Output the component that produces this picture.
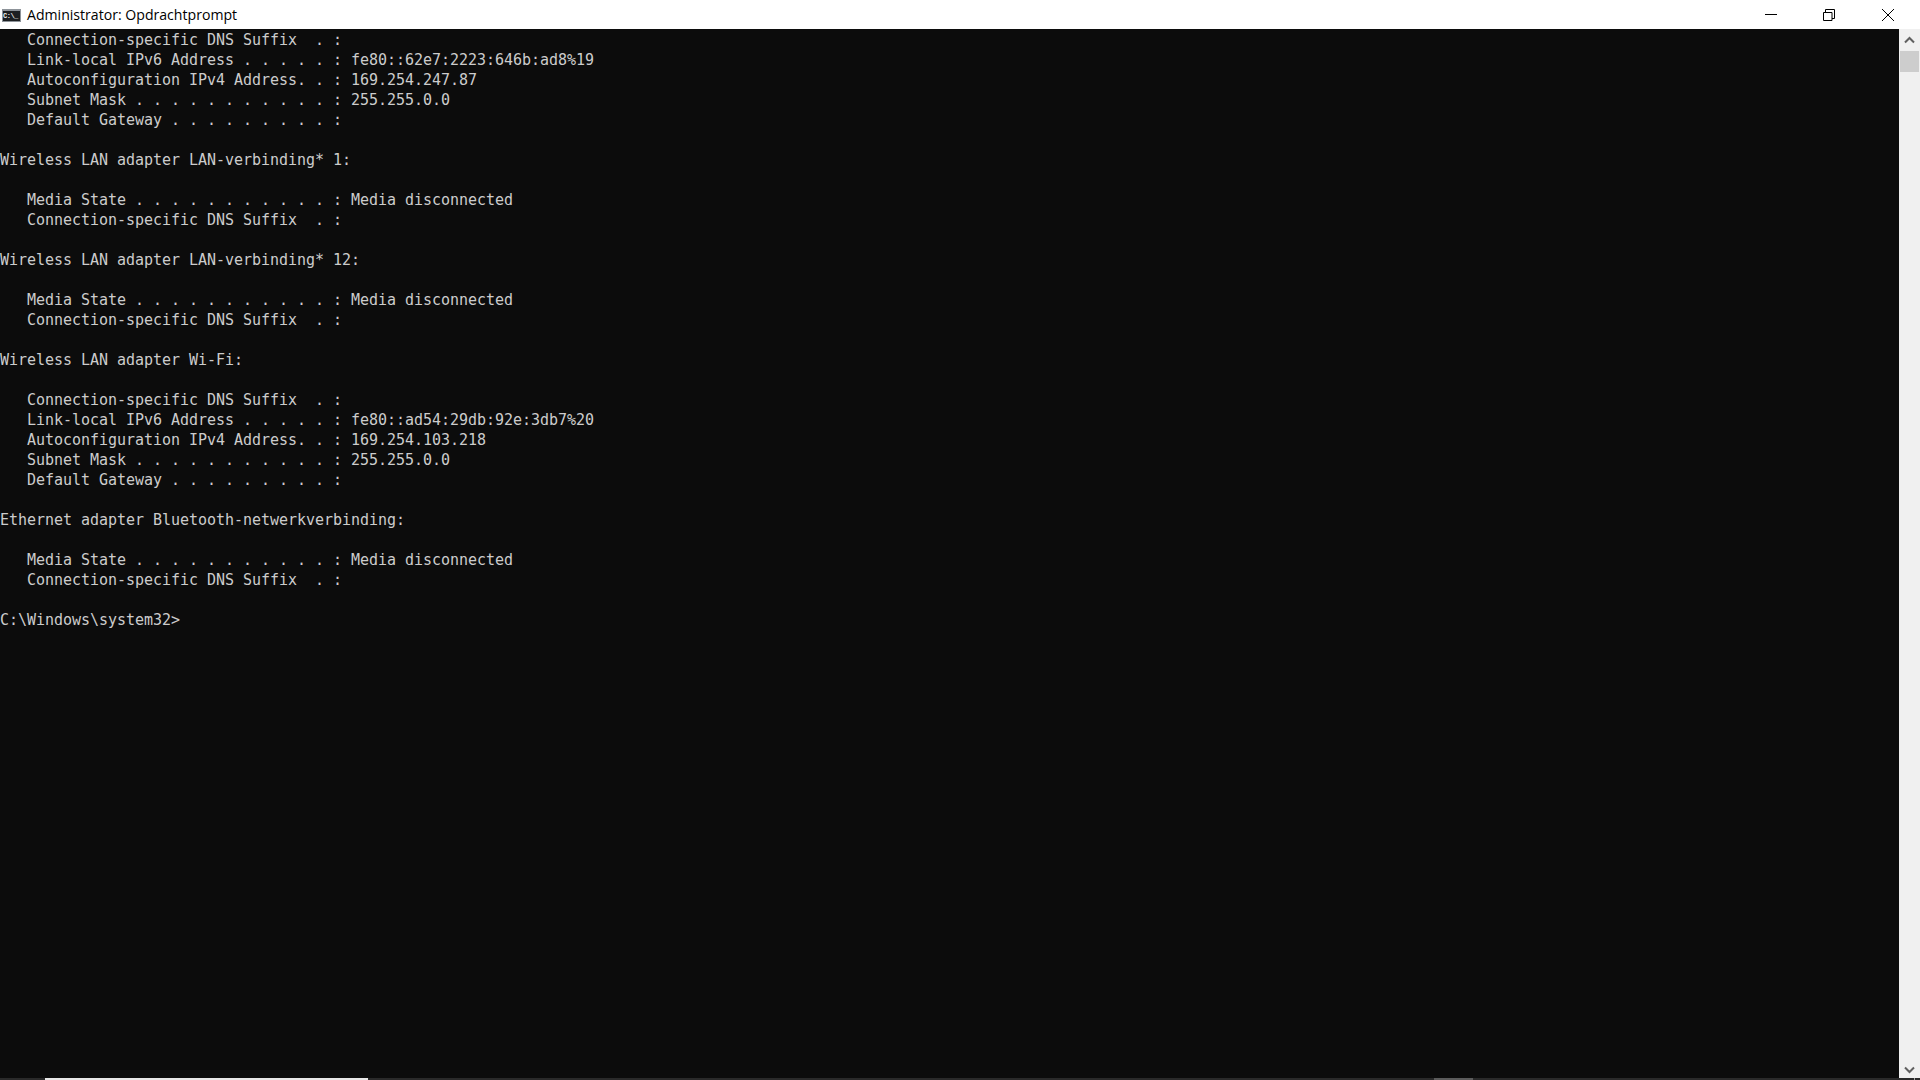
<script>
  const lines = [
    '   Connection-specific DNS Suffix  . :',
    '   Link-local IPv6 Address . . . . . : fe80::62e7:2223:646b:ad8%19',
    '   Autoconfiguration IPv4 Address. . : 169.254.247.87',
    '   Subnet Mask . . . . . . . . . . . : 255.255.0.0',
    '   Default Gateway . . . . . . . . . :',
    '',
    'Wireless LAN adapter LAN-verbinding* 1:',
    '',
    '   Media State . . . . . . . . . . . : Media disconnected',
    '   Connection-specific DNS Suffix  . :',
    '',
    'Wireless LAN adapter LAN-verbinding* 12:',
    '',
    '   Media State . . . . . . . . . . . : Media disconnected',
    '   Connection-specific DNS Suffix  . :',
    '',
    'Wireless LAN adapter Wi-Fi:',
    '',
    '   Connection-specific DNS Suffix  . :',
    '   Link-local IPv6 Address . . . . . : fe80::ad54:29db:92e:3db7%20',
    '   Autoconfiguration IPv4 Address. . : 169.254.103.218',
    '   Subnet Mask . . . . . . . . . . . : 255.255.0.0',
    '   Default Gateway . . . . . . . . . :',
    '',
    'Ethernet adapter Bluetooth-netwerkverbinding:',
    '',
    '   Media State . . . . . . . . . . . : Media disconnected',
    '   Connection-specific DNS Suffix  . :',
    '',
    'C:\\Windows\\system32>'
  ];
</script>

<div class="window">
  <header class="titlebar">
    <div class="app-icon"><span>C:\_</span></div>
    <span class="title">Administrator: Opdrachtprompt</span>
    <div class="controls">
      <div class="ctl">
        <svg width="12" height="12" viewBox="0 0 12 12"><path d="M0 5.500h12" stroke="#000" fill="none" /></svg>
      </div>
      <div class="ctl">
        <svg width="12" height="12" viewBox="0 0 12 12"><path d="M.5 3.500h8.500v8h-8.500zM2.500 3.500v-3h9v9h-2.500" stroke="#000" fill="none" /></svg>
      </div>
      <div class="ctl">
        <svg width="12" height="12" viewBox="0 0 12 12"><path d="M0 0l12 12M12 0L0 12" stroke="#000" fill="none" /></svg>
      </div>
    </div>
  </header>

  <div class="body">
    <pre class="console">{lines.join('\n')}</pre>
    <aside class="scrollbar">
      <div class="arrow up">
        <svg width="11" height="8" viewBox="0 0 11 8"><path d="M1 6.500l4.500-4.500 4.500 4.500" stroke="#606060" stroke-width="2" fill="none" /></svg>
      </div>
      <div class="thumb"></div>
      <div class="track"></div>
      <div class="arrow down">
        <svg width="11" height="8" viewBox="0 0 11 8"><path d="M1 1.500l4.500 4.500 4.500-4.500" stroke="#606060" stroke-width="2" fill="none" /></svg>
      </div>
    </aside>
  </div>

  <div class="strip">
    <div class="dark s1"></div>
    <div class="light s2"></div>
    <div class="dark s3"></div>
    <div class="grey s4"></div>
    <div class="dark s5"></div>
    <div class="tick"></div>
    <div class="dark s6"></div>
  </div>
</div>

<style>
  :global(body) {
    margin: 0;
    background: #0c0c0c;
  }
  .window {
    display: flex;
    flex-direction: column;
    width: 1920px;
    height: 1080px;
    overflow: hidden;
  }
  .titlebar {
    display: flex;
    align-items: center;
    flex: 0 0 29px;
    background: #fff;
  }
  .app-icon {
    display: flex;
    align-items: center;
    box-sizing: border-box;
    width: 19px;
    height: 13px;
    margin: 2px 0 0 2px;
    background: #1c1f22;
    border: 1px solid #8d9399;
    border-top-width: 2px;
    overflow: hidden;
  }
  .app-icon span {
    font: bold 7px "Liberation Mono", monospace;
    color: #f0f0f0;
    letter-spacing: -0.5px;
  }
  .title {
    margin-left: 6px;
    font: 14.1px "Open Sans", sans-serif;
    color: #000;
  }
  .controls {
    display: flex;
    margin-left: auto;
    padding-right: 3px;
  }
  .ctl {
    display: flex;
    align-items: center;
    justify-content: center;
    width: 58.500px;
    height: 28px;
  }
  .body {
    display: flex;
    flex: 1;
    min-height: 0;
  }
  .console {
    flex: 1;
    margin: 0;
    padding-top: 1px;
    font: 15px/20px "DejaVu Sans Mono", monospace;
    letter-spacing: -0.03px;
    color: #cccccc;
    background: #0c0c0c;
    overflow: hidden;
  }
  .scrollbar {
    display: flex;
    flex-direction: column;
    flex: 0 0 21px;
    background: #f0f0f0;
  }
  .arrow {
    display: flex;
    align-items: center;
    justify-content: center;
  }
  .up {
    flex: 0 0 22px;
  }
  .down {
    flex: 0 0 17px;
  }
  .thumb {
    flex: 0 0 21px;
    margin: 0 1px;
    background: #cdcdcd;
  }
  .track {
    flex: 1;
  }
  .strip {
    display: flex;
    flex: 0 0 2px;
  }
  .strip div {
    height: 2px;
  }
  .dark {
    background: #2a2a2a;
  }
  .light {
    background: #e8e8e8;
  }
  .grey {
    background: #5c5c5c;
  }
  .tick {
    width: 1px;
    background: #a0a0a0;
  }
  .s1 {
    width: 45px;
  }
  .s2 {
    width: 323px;
  }
  .s3 {
    width: 1066px;
  }
  .s4 {
    width: 39px;
  }
  .s5 {
    width: 441px;
  }
  .s6 {
    flex: 1;
  }
</style>
